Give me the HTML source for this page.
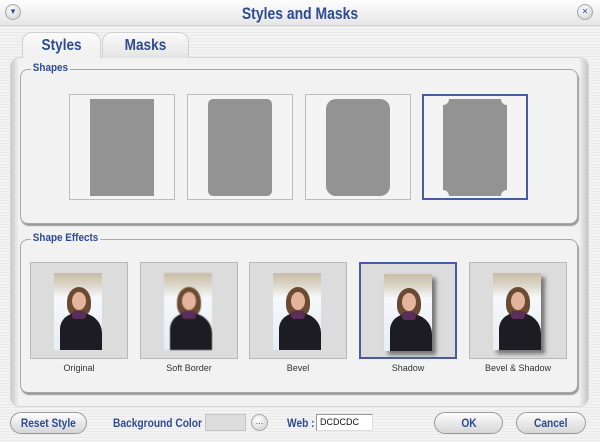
<!DOCTYPE html>
<html><head><style>
*{margin:0;padding:0;box-sizing:border-box}
body{width:600px;height:442px;overflow:hidden;font-family:"Liberation Sans",sans-serif;background:repeating-linear-gradient(#f3f3f3 0 2px,#e9e9e9 2px 3px);position:relative}
.a{position:absolute}
.title{left:0;top:0;width:600px;height:26px;background:linear-gradient(#fdfdfd,#e6e6e6);border-bottom:1px solid #d4d4d4}
.title span{position:absolute;left:0;right:0;top:4px;text-align:center;color:#2d4b92;font-weight:bold;font-size:17px;transform:scaleX(.82)}
.circ{width:16px;height:16px;border-radius:50%;border:1px solid #aaa;background:radial-gradient(circle at 40% 35%,#fff,#ccc);font-size:8px;color:#3a4e8c;text-align:center;line-height:14px}
.tab{top:32px;height:26px;border:1px solid #d0d0d0;border-bottom:none;border-radius:10px 10px 0 0;background:linear-gradient(#fafafa,#e4e4e4);color:#2d4b92;font-weight:bold;font-size:16px;text-align:center;line-height:26px}
.tab span{display:inline-block;transform:scaleX(.85)}
.outer{left:10px;top:57px;width:579px;height:350px;border-radius:10px;background:linear-gradient(90deg,#c4c4c4,#f2f2f2 9px,#f2f2f2 calc(100% - 10px),#c0c0c0);box-shadow:inset 0 0 0 1px #d6d6d6}
.grp{left:20px;width:558px;border:1px solid #a8a8a8;border-radius:8px;background:#f2f2f2;box-shadow:1px 2px 1px #9a9a9a}
.lbl{color:#2d4b92;font-weight:bold;font-size:11px;background:#f2f2f2;padding:0 2px;transform:scaleX(.9);transform-origin:left}
.sh{top:94px;width:106px;height:106px;border:1px solid #bdbdbd;background:#f4f4f4}
.sh.sel{border:2px solid #4a5a9e}
.g{background:#939393;position:absolute;top:4px;height:97px;left:20px;width:64px}
.ef{top:262px;width:98px;height:97px;border:1px solid #b8b8b8;background:#dcdcdc}
.ef.sel{border:2px solid #4a5a9e}
.ph{position:absolute;left:23px;top:10px;width:48px;height:77px;background:linear-gradient(#c9bca8 0,#d9d3c4 14%,#f6f8fb 32%,#e6edf6 100%);overflow:hidden}
.ph .hair{position:absolute;left:13px;top:14px;width:24px;height:30px;border-radius:50% 50% 40% 40%;background:#6b4a32}
.ph .face{position:absolute;left:18px;top:19px;width:14px;height:18px;border-radius:50%;background:#e4b49c}
.ph .coat{position:absolute;left:6px;top:40px;width:42px;height:40px;border-radius:40% 50% 0 0;background:#1c1c22}
.ph .sc{position:absolute;left:18px;top:38px;width:14px;height:8px;background:#5a2d5a;border-radius:3px}
.cap{top:363px;width:98px;text-align:center;font-size:9px;color:#333}
.btn{top:412px;height:22px;border:1px solid #9a9a9a;border-radius:11px;background:linear-gradient(#fdfdfd,#d6d6d6);color:#2d4b92;font-weight:bold;font-size:12px;text-align:center;line-height:20px}
.btn span{display:inline-block;transform:scaleX(.85)}
.tl{color:#2d4b92;font-weight:bold;font-size:12px;top:416px;transform:scaleX(.85);transform-origin:left}
</style></head><body>
<div class="a title"><span>Styles and Masks</span></div>
<div class="a circ" style="left:5px;top:4px">▼</div>
<div class="a circ" style="left:577px;top:4px">✕</div>
<div class="a outer"></div>
<div class="a tab" style="left:22px;width:79px;background:linear-gradient(#fafafa,#f0f0f0)"><span>Styles</span></div>
<div class="a tab" style="left:102px;width:87px"><span>Masks</span></div>

<div class="a grp" style="top:69px;height:155px"></div>
<div class="a lbl" style="left:31px;top:62px">Shapes</div>
<div class="a sh" style="left:69px"><div class="g"></div></div>
<div class="a sh" style="left:187px"><div class="g" style="border-radius:5px"></div></div>
<div class="a sh" style="left:305px"><div class="g" style="border-radius:10px"></div></div>
<div class="a sh sel" style="left:422px"><svg class="a" style="left:19px;top:3px" width="64" height="97"><path d="M6 0H58A6 6 0 0 0 64 6V91A6 6 0 0 0 58 97H6A6 6 0 0 0 0 91V6A6 6 0 0 0 6 0Z" fill="#939393"/></svg></div>

<div class="a grp" style="top:239px;height:154px"></div>
<div class="a lbl" style="left:31px;top:232px">Shape Effects</div>
<div class="a ef" style="left:30px"><div class="ph"><div class="hair"></div><div class="face"></div><div class="coat"></div><div class="sc"></div></div></div>
<div class="a ef" style="left:140px"><div class="ph" style="filter:blur(.6px)"><div class="hair"></div><div class="face"></div><div class="coat"></div><div class="sc"></div></div></div>
<div class="a ef" style="left:249px"><div class="ph"><div class="hair"></div><div class="face"></div><div class="coat"></div><div class="sc"></div></div></div>
<div class="a ef sel" style="left:359px"><div class="ph" style="box-shadow:4px 4px 4px #777"><div class="hair"></div><div class="face"></div><div class="coat"></div><div class="sc"></div></div></div>
<div class="a ef" style="left:469px"><div class="ph" style="box-shadow:4px 4px 4px #777"><div class="hair"></div><div class="face"></div><div class="coat"></div><div class="sc"></div></div></div>
<div class="a cap" style="left:30px">Original</div>
<div class="a cap" style="left:140px">Soft Border</div>
<div class="a cap" style="left:249px">Bevel</div>
<div class="a cap" style="left:359px">Shadow</div>
<div class="a cap" style="left:469px">Bevel &amp; Shadow</div>

<div class="a btn" style="left:10px;width:77px"><span>Reset Style</span></div>
<div class="a tl" style="left:113px">Background Color :</div>
<div class="a" style="left:205px;top:414px;width:41px;height:17px;background:#dcdcdc;border:1px solid #c4c4c4"></div>
<div class="a circ" style="left:251px;top:414px;width:17px;height:17px;line-height:12px;font-size:9px">...</div>
<div class="a tl" style="left:287px">Web :</div>
<div class="a" style="left:316px;top:414px;width:57px;height:17px;background:#fff;border:1px solid #999;border-right-color:#ddd;border-bottom-color:#ddd;font-size:9px;line-height:15px;padding-left:3px;color:#111">DCDCDC</div>
<div class="a btn" style="left:434px;width:69px"><span>OK</span></div>
<div class="a btn" style="left:516px;width:70px"><span>Cancel</span></div>
</body></html>
